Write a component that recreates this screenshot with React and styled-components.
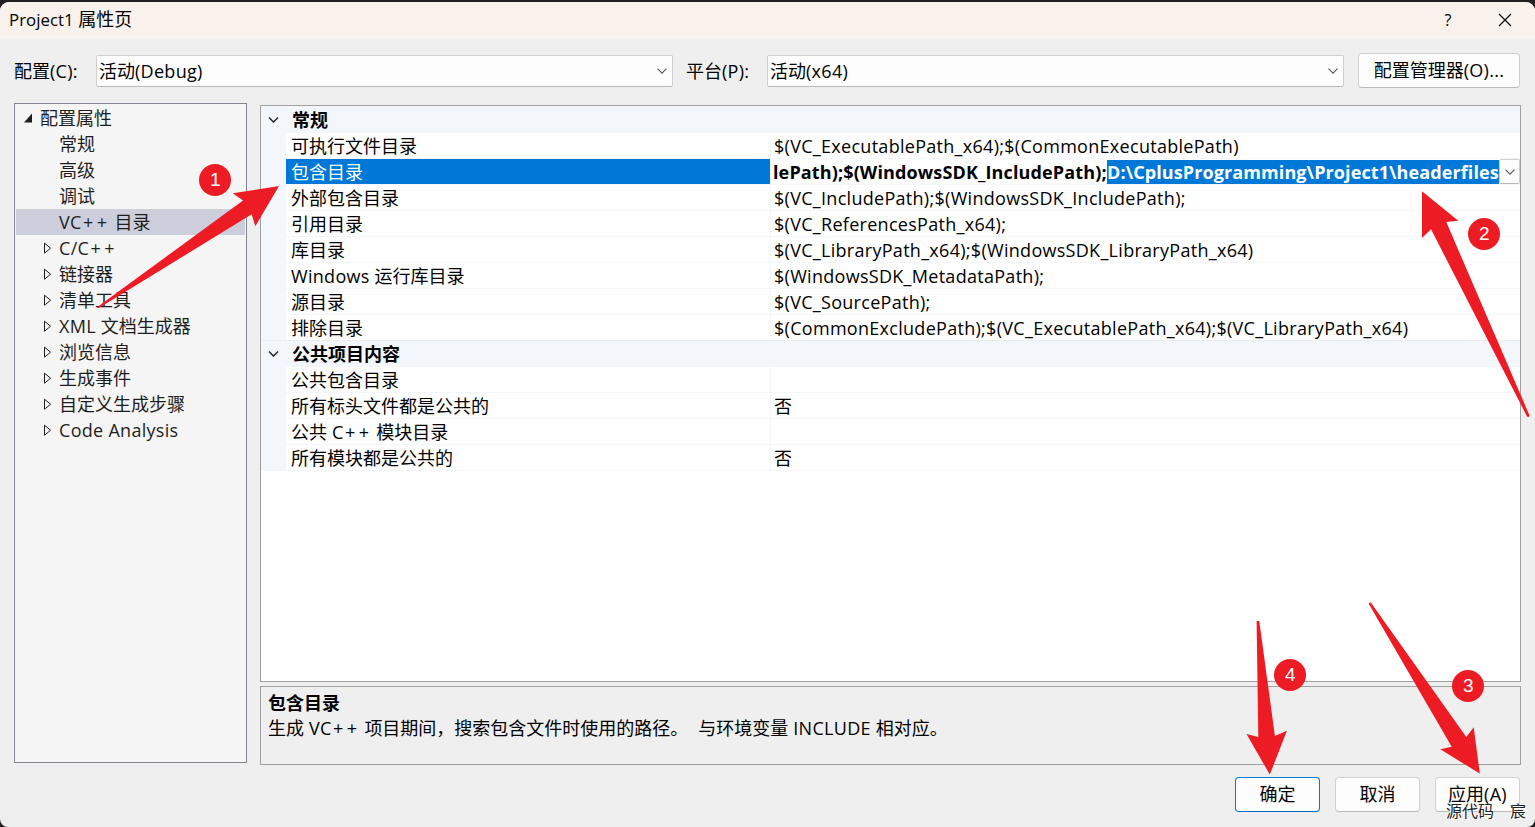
import React from 'react';
import styled, { createGlobalStyle, css } from 'styled-components';

const Global = createGlobalStyle`
  * { box-sizing: border-box; }
  html, body { margin: 0; background: #231f20; overflow: hidden; }
`;

const Screen = styled.div`
  position: relative;
  width: 1535px;
  height: 827px;
  padding-top: 2px;
  background: #231f20;
  font-family: 'Open Sans', 'Noto Sans CJK SC', sans-serif;
  font-size: 18px;
  color: #000;
  overflow: hidden;
`;

const Dialog = styled.div`
  display: flex;
  flex-direction: column;
  height: 825px;
  background: #efefef;
  border-radius: 9px 9px 8px 8px;
  overflow: hidden;
`;

const TitleBar = styled.header`
  display: flex;
  align-items: flex-start;
  height: 37px;
  padding: 0 23px 0 9px;
  background: #f9f1eb;
  line-height: 35px;
`;

const Title = styled.h1`
  flex: 1;
  margin: 0;
  font-size: 18px;
  font-weight: 400;
`;

const TitleLatin = styled.span`
  font-size: 16.8px;
  letter-spacing: 0.05px;
`;

const CaptionButton = styled.button`
  display: flex;
  align-items: center;
  justify-content: center;
  width: 14px;
  height: 36px;
  padding: 0;
  margin-left: 43px;
  border: 0;
  background: none;
  font: 16px 'Open Sans', sans-serif;
`;

const Toolbar = styled.div`
  display: flex;
  align-items: center;
  height: 64px;
  padding: 0 15px 0 14px;
`;

const FieldLabel = styled.label`
  width: ${(p) => p.$width}px;
  line-height: 32px;
  white-space: nowrap;
`;

const Combo = styled.div`
  display: flex;
  align-items: center;
  justify-content: space-between;
  width: 577px;
  height: 32px;
  padding: 0 5px 0 2px;
  margin-right: ${(p) => p.$gap}px;
  background: #fdfdfd;
  border: 1px solid #d0d0d0;
  border-bottom-color: #b8b8b8;
  border-radius: 2px;
  line-height: 30px;
`;

const Button = styled.button`
  width: ${(p) => p.$width || 85}px;
  height: 35px;
  margin-bottom: ${(p) => p.$lift || 0}px;
  padding: 0 0 1px;
  background: #fdfdfd;
  border: 1px solid ${(p) => (p.$primary ? '#0078d4' : '#d0d0d0')};
  border-bottom-color: ${(p) => (p.$primary ? '#0067c0' : '#bababa')};
  border-radius: 4px;
  color: #000;
  font: inherit;
  line-height: 30px;
  white-space: nowrap;
`;

const Body = styled.main`
  display: flex;
  gap: 13px;
  height: 663px;
  padding-left: 14px;
`;

const Tree = styled.nav`
  width: 233px;
  height: 660px;
  padding: 1px;
  background: #f5f5f5;
  border: 1px solid #828790;
  color: #1e1e1e;
`;

const TreeRow = styled.div`
  display: flex;
  align-items: center;
  height: 26px;
  padding-left: ${(p) => (p.$root ? 5 : 24)}px;
  background: ${(p) => (p.$selected ? '#cccedb' : 'transparent')};
  line-height: 26px;
  white-space: nowrap;
`;

const Expander = styled.span`
  display: flex;
  align-items: center;
  width: 19px;
`;

const Details = styled.section`
  display: flex;
  flex-direction: column;
  gap: 4px;
  width: 1261px;
  padding-top: 2px;
`;

const Grid = styled.div`
  height: 577px;
  background: #fff;
  border: 1px solid #a0a0a0;
`;

const Category = styled.div`
  display: flex;
  align-items: center;
  height: ${(p) => (p.$first ? 27 : 26)}px;
  padding-left: 7px;
  padding-bottom: ${(p) => (p.$first ? 0 : 1)}px;
  background: #f3f7fc;
  box-shadow: ${(p) => (p.$first ? 'none' : '0 -1px 0 #ececee')};
  font-weight: 700;
  line-height: 25px;
`;

const CategoryName = styled.span`
  padding: 2px 0 0 13px;
`;

const Property = styled.div`
  display: grid;
  grid-template-columns: 25px 484px 1fr;
  height: 26px;
  background: #f3f7fc;
`;

const Name = styled.div`
  grid-column: 2;
  height: 25px;
  padding-left: 5px;
  background: #fff;
  line-height: 26px;
  white-space: nowrap;
  ${(p) => p.$selected && css`
    background: #0078d7;
    color: #fff;
  `}
`;

const Value = styled.div`
  display: flex;
  height: 25px;
  margin-left: 1px;
  padding-left: ${(p) => (p.$editing ? 2 : 3)}px;
  background: #fff;
  line-height: 26px;
  white-space: nowrap;
`;

const EditText = styled.span`
  width: 334px;
  font-weight: 700;
  letter-spacing: 0.13px;
`;

const Selection = styled.span`
  width: 392px;
  height: 24px;
  margin-top: 1px;
  background: #0078d7;
  color: #fff;
  font-weight: 700;
  line-height: 24px;
  letter-spacing: 0.1px;
`;

const DropButton = styled.span`
  display: flex;
  align-items: center;
  justify-content: center;
  width: 21px;
  height: 25px;
  background: #fdfdfd;
  border: 1px solid #d0d0d0;
  border-bottom-color: #b8b8b8;
  border-radius: 2px;
`;

const Description = styled.div`
  height: 79px;
  padding: 4px 7px;
  border: 1px solid #a0a0a0;
  line-height: 24px;
  white-space: pre;
`;

const DescriptionTitle = styled.div`
  line-height: 25px;
  font-weight: 700;
`;

const Footer = styled.footer`
  display: flex;
  justify-content: flex-end;
  gap: 15px;
  padding: 11px 15px 0 0;
`;

const Latin = styled.span`
  letter-spacing: 0.29px;
`;

const Plus = styled.span`
  letter-spacing: 3.4px;
  margin-left: 1.4px;
  margin-right: -1px;
`;

const Arrows = styled.svg`
  position: absolute;
  inset: 0;
  fill: #ed1c24;
  pointer-events: none;
`;

const Badge = styled.span`
  position: absolute;
  left: ${(p) => p.$x - 16}px;
  top: ${(p) => p.$y - 16}px;
  width: 32px;
  height: 32px;
  border-radius: 50%;
  background: #ed1c24;
  color: #fff;
  font: 19px/32px 'Liberation Sans', sans-serif;
  text-align: center;
`;

const Watermark = styled.span`
  position: absolute;
  left: 1446px;
  top: 798px;
  display: flex;
  gap: 16px;
  color: #222;
  font: 16px/24px 'Noto Sans CJK SC', sans-serif;
  text-shadow: 0 0 1px #fff, 1px 1px 1px #fff, -1px 0 1px #fff;
`;

const Text = ({ children }) =>
  children.split(/(\++|[\x20-\x2a\x2c-\x7e]+)/).map((run, i) => {
    if (!run) return null;
    if (run[0] === '+') return <Plus key={i}>{run}</Plus>;
    return run.charCodeAt(0) < 127 ? <Latin key={i}>{run}</Latin> : run;
  });

const Chevron = ({ color = '#555', w = 10, stroke = 1.1 }) => (
  <svg width={w} height="6" viewBox="0 0 10 6" fill="none" stroke={color} strokeWidth={stroke}>
    <path d="M0.5 0.6 5 5.1 9.5 0.6" />
  </svg>
);

const treeItems = [
  ['常规'], ['高级'], ['调试'], ['VC++ 目录'],
  ['C/C++', true], ['链接器', true], ['清单工具', true], ['XML 文档生成器', true],
  ['浏览信息', true], ['生成事件', true], ['自定义生成步骤', true], ['Code Analysis', true],
];

const general = [
  ['可执行文件目录', '$(VC_ExecutablePath_x64);$(CommonExecutablePath)'],
  ['包含目录', null],
  ['外部包含目录', '$(VC_IncludePath);$(WindowsSDK_IncludePath);'],
  ['引用目录', '$(VC_ReferencesPath_x64);'],
  ['库目录', '$(VC_LibraryPath_x64);$(WindowsSDK_LibraryPath_x64)'],
  ['Windows 运行库目录', '$(WindowsSDK_MetadataPath);'],
  ['源目录', '$(VC_SourcePath);'],
  ['排除目录', '$(CommonExcludePath);$(VC_ExecutablePath_x64);$(VC_LibraryPath_x64)'],
];

const shared = [
  ['公共包含目录', ''],
  ['所有标头文件都是公共的', '否'],
  ['公共 C++ 模块目录', ''],
  ['所有模块都是公共的', '否'],
];

const PropertyRow = ({ name, value }) => (
  <Property>
    <Name $selected={value === null}><Text>{name}</Text></Name>
    {value === null ? (
      <Value $editing>
        <EditText>lePath);$(WindowsSDK_IncludePath);</EditText>
        <Selection>D:\CplusProgramming\Project1\headerfiles</Selection>
        <DropButton><Chevron /></DropButton>
      </Value>
    ) : (
      <Value><Text>{value}</Text></Value>
    )}
  </Property>
);

export default function App() {
  return (
    <Screen>
      <Global />
      <Dialog>
        <TitleBar>
          <Title><TitleLatin>Project1 </TitleLatin>属性页</Title>
          <CaptionButton>?</CaptionButton>
          <CaptionButton>
            <svg width="14" height="14" viewBox="0 0 14 14" stroke="#111" strokeWidth="1.3">
              <path d="M1 1 13 13M13 1 1 13" />
            </svg>
          </CaptionButton>
        </TitleBar>
        <Toolbar>
          <FieldLabel $width={82}><Text>配置(C):</Text></FieldLabel>
          <Combo $gap={13}><span><Text>活动(Debug)</Text></span><Chevron /></Combo>
          <FieldLabel $width={81}><Text>平台(P):</Text></FieldLabel>
          <Combo $gap={14}><span><Text>活动(x64)</Text></span><Chevron /></Combo>
          <Button $width={162} $lift={2}><Text>配置管理器(O)...</Text></Button>
        </Toolbar>
        <Body>
          <Tree>
            <TreeRow $root>
              <Expander>
                <svg width="12" height="10"><path d="M3 9.5H11V0.5Z" fill="#1e1e1e" /></svg>
              </Expander>
              配置属性
            </TreeRow>
            {treeItems.map(([label, expandable]) => (
              <TreeRow key={label} $selected={label === 'VC++ 目录'}>
                <Expander>
                  {expandable && (
                    <svg width="12" height="12" fill="none" stroke="#1e1e1e">
                      <path d="M4.5 1.2V11.2L10.6 6.2Z" />
                    </svg>
                  )}
                </Expander>
                <span><Text>{label}</Text></span>
              </TreeRow>
            ))}
          </Tree>
          <Details>
            <Grid>
              <Category $first><Chevron w={11} color="#222" stroke={1.4} /><CategoryName>常规</CategoryName></Category>
              {general.map(([n, v]) => <PropertyRow key={n} name={n} value={v} />)}
              <Category><Chevron w={11} color="#222" stroke={1.4} /><CategoryName>公共项目内容</CategoryName></Category>
              {shared.map(([n, v]) => <PropertyRow key={n} name={n} value={v} />)}
            </Grid>
            <Description>
              <DescriptionTitle>包含目录</DescriptionTitle>
              <Text>生成 VC++ 项目期间，搜索包含文件时使用的路径。  与环境变量 INCLUDE 相对应。</Text>
            </Description>
          </Details>
        </Body>
        <Footer>
          <Button $primary>确定</Button>
          <Button>取消</Button>
          <Button><Text>应用(A)</Text></Button>
        </Footer>
      </Dialog>
      <Arrows width="1535" height="827">
        <path d="M279 186 232.7 193.3 243 200.5 97 307.3 98.5 308.3 251.7 214.3 255.3 226.3Z" />
        <path d="M1422 191.3V238L1431 229.3 1527 416.5Q1529 418 1529.5 415.5L1446.3 222 1458.3 220.7Z" />
        <path d="M1479.8 773.6 1473.7 727.3 1466.3 737 1370.8 602.5Q1368.5 602 1369 604.3L1451.7 746.7 1440.3 749.3Z" />
        <path d="M1269.8 774.6 1286.9 730.8 1274.9 736 1259.3 621.3Q1258 620 1256.6 621.3L1258.3 737 1246.5 734Z" />
      </Arrows>
      <Badge $x={215.3} $y={180.4}>1</Badge>
      <Badge $x={1484.4} $y={234.4}>2</Badge>
      <Badge $x={1468.4} $y={686.4}>3</Badge>
      <Badge $x={1290.4} $y={675.4}>4</Badge>
      <Watermark><span>源代码</span><span>宸</span></Watermark>
    </Screen>
  );
}
